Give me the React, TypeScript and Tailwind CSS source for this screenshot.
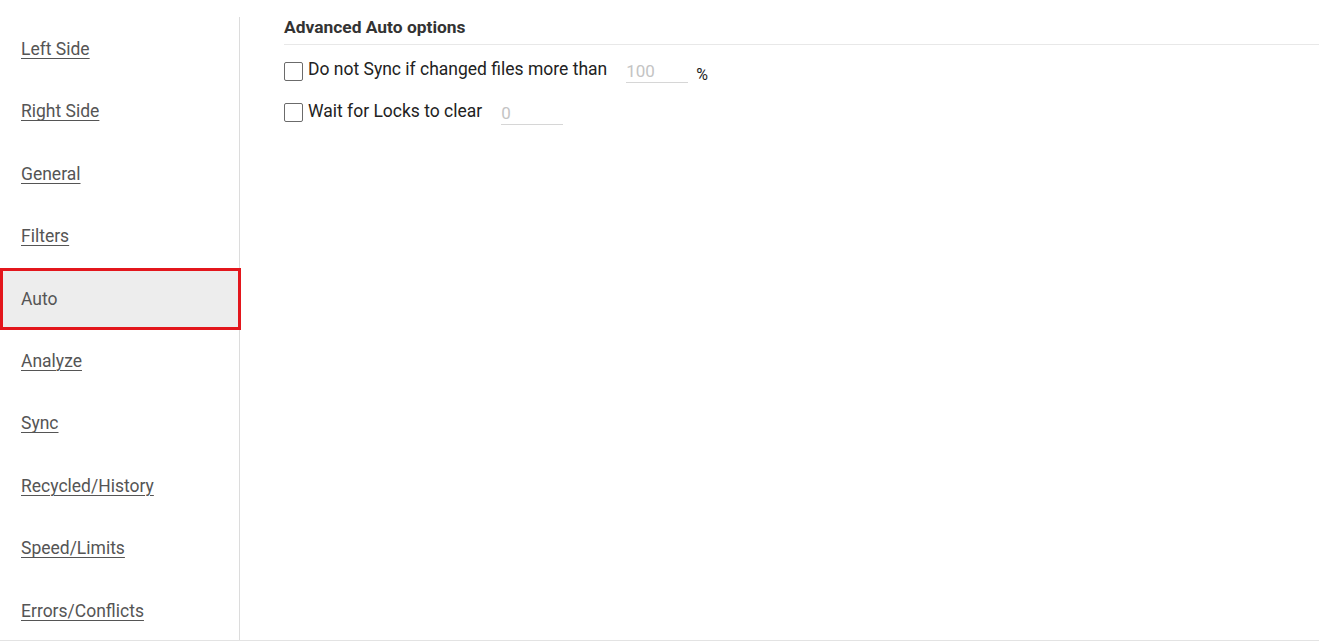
import React from "react";

const items = [
  "Left Side",
  "Right Side",
  "General",
  "Filters",
  "Auto",
  "Analyze",
  "Sync",
  "Recycled/History",
  "Speed/Limits",
  "Errors/Conflicts",
];

function CheckBox() {
  return (
    <span className="inline-block w-[19px] h-[19px] border-[1.5px] border-[#6b6b6b] rounded-[2px] bg-white shrink-0" />
  );
}

export default function App() {
  return (
    <div
      className="w-[1319px] h-[642px] bg-white overflow-hidden"
      style={{ fontFamily: "Roboto, 'Noto Sans', sans-serif" }}
    >
      <div className="flex h-[641px] pt-[17px] border-b border-[#e3e3e3] overflow-hidden">
        <nav className="w-[240px] shrink-0 border-r border-[#dcdcdc] flex flex-col pt-[1px]">
          {items.map((it) =>
            it === "Auto" ? (
              <div
                key={it}
                className="relative z-10 -mr-[2px] h-[62.4px] shrink-0 flex items-center pl-[18px] bg-[#ededed] border-[3px] border-[#e3161c] text-[17.5px] text-[#555]"
              >
                {it}
              </div>
            ) : (
              <div
                key={it}
                className="h-[62.4px] shrink-0 flex items-center pl-[21px] text-[17.5px] text-[#555]"
              >
                <span className="underline underline-offset-[3px] decoration-[1px]">{it}</span>
              </div>
            )
          )}
        </nav>
        <main className="flex-1 pl-[44px]">
          <div className="h-[28px] border-b border-[#e8e8e8] flex items-start">
            <h2 className="text-[17.4px] font-bold text-[#333] leading-[20px]">Advanced Auto options</h2>
          </div>
          <div className="flex items-center h-[42px] mt-[5px]">
            <CheckBox />
            <span className="ml-[5px] text-[17.5px] text-[#222] -mt-[3px]">Do not Sync if changed files more than</span>
            <span className="ml-[19px] w-[62px] h-[24px] border-b border-[#d6d6d6] text-[17px] text-[#c4c4c4] leading-[24px]">100</span>
            <span className="ml-[8px] text-[16px] text-[#222] mt-[7px]">%</span>
          </div>
          <div className="flex items-center h-[41px]">
            <CheckBox />
            <span className="ml-[5px] text-[17.5px] text-[#222] -mt-[3px]">Wait for Locks to clear</span>
            <span className="ml-[19px] w-[62px] h-[24px] border-b border-[#d6d6d6] text-[17px] text-[#c4c4c4] leading-[24px]">0</span>
          </div>
        </main>
      </div>
    </div>
  );
}
